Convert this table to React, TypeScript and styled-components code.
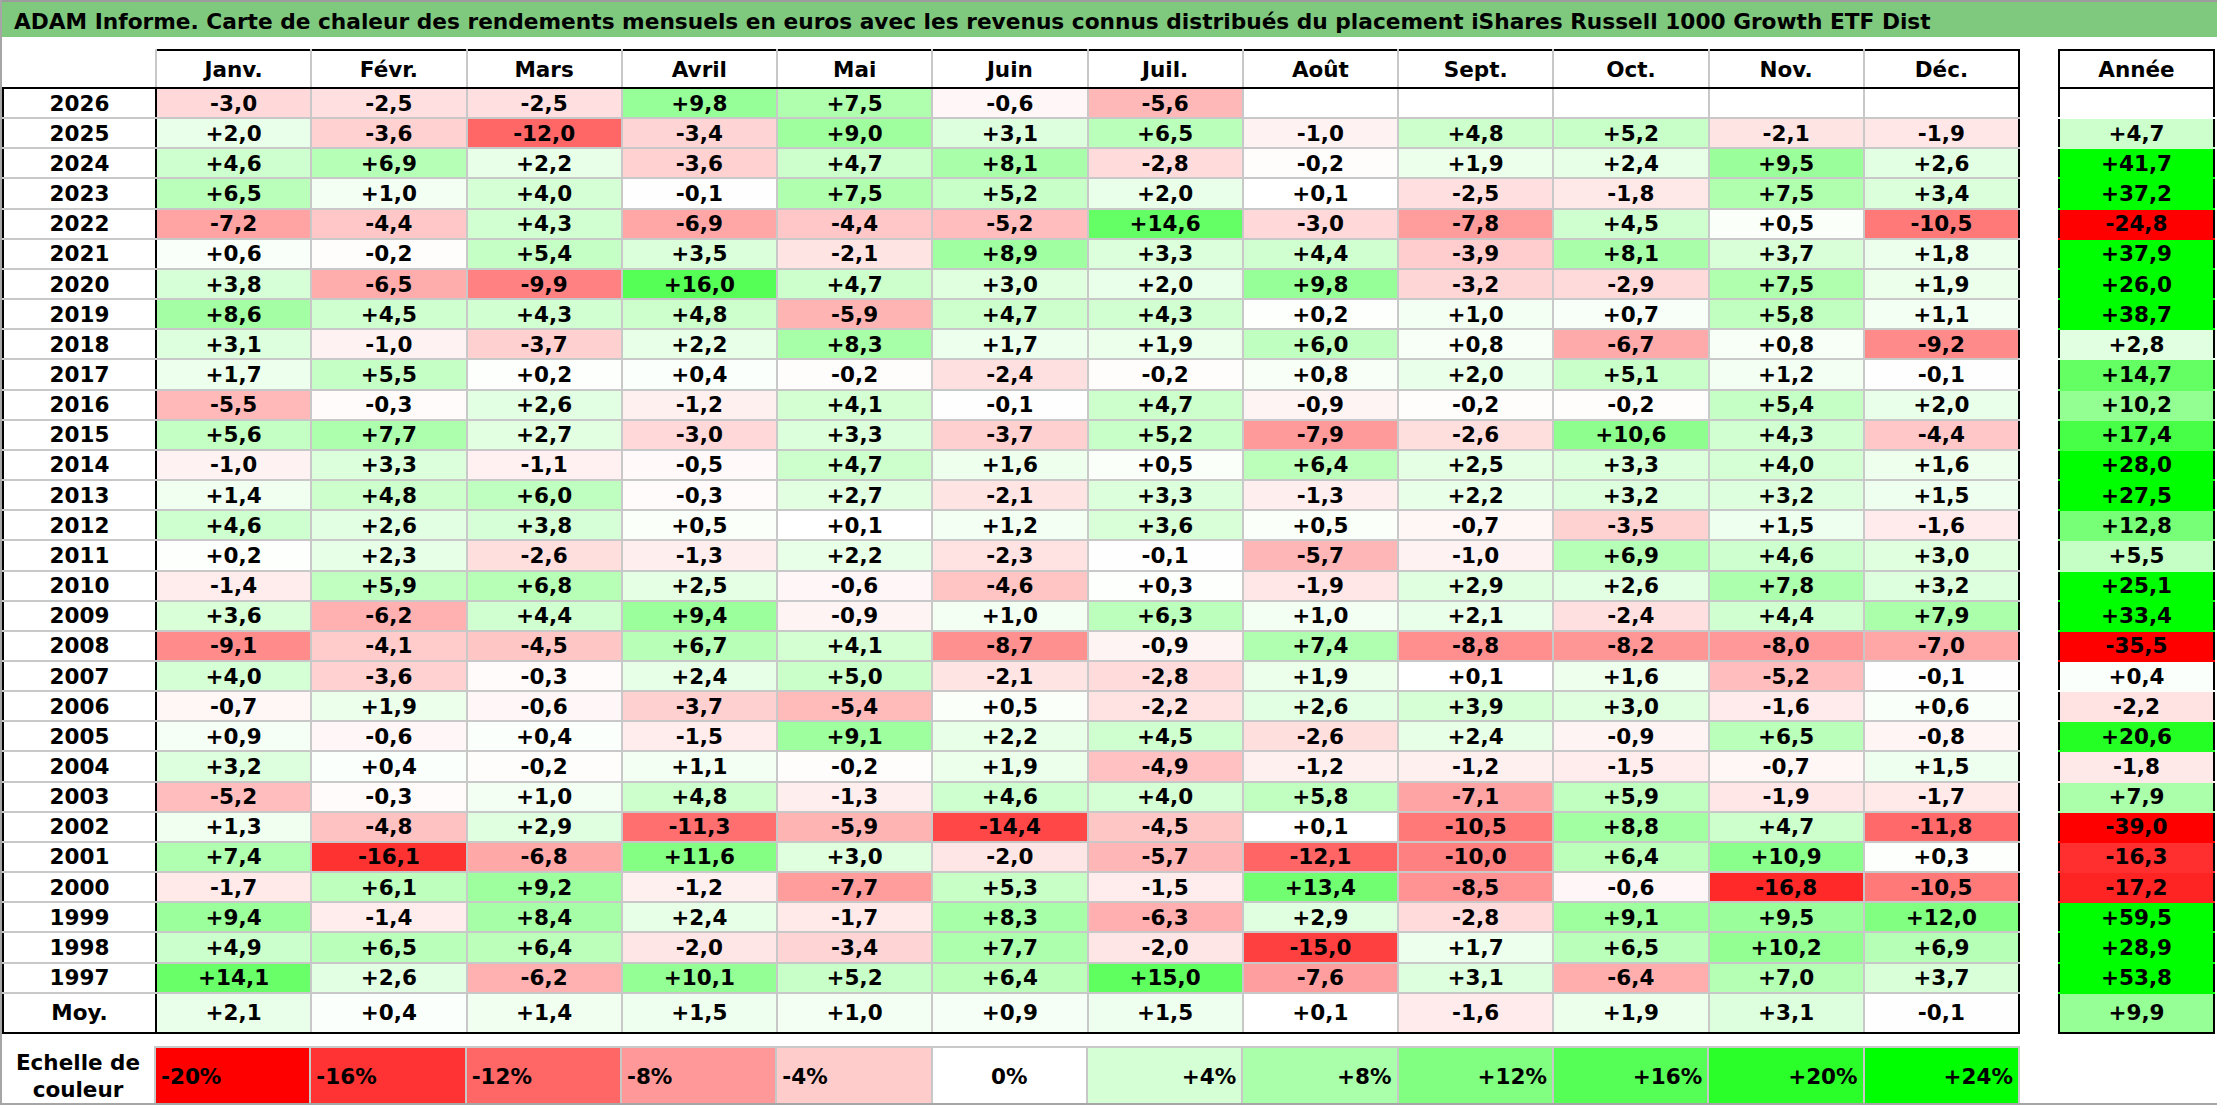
import React from 'react';
import styled, { createGlobalStyle } from 'styled-components';

const months = ['Janv.', 'Févr.', 'Mars', 'Avril', 'Mai', 'Juin', 'Juil.', 'Août', 'Sept.', 'Oct.', 'Nov.', 'Déc.'];

// year | 12 monthly values (. = pas encore connu) | year total
const rows: string[] = [
  '2026|-3,0 -2,5 -2,5 +9,8 +7,5 -0,6 -5,6 . . . . .|.',
  '2025|+2,0 -3,6 -12,0 -3,4 +9,0 +3,1 +6,5 -1,0 +4,8 +5,2 -2,1 -1,9|+4,7',
  '2024|+4,6 +6,9 +2,2 -3,6 +4,7 +8,1 -2,8 -0,2 +1,9 +2,4 +9,5 +2,6|+41,7',
  '2023|+6,5 +1,0 +4,0 -0,1 +7,5 +5,2 +2,0 +0,1 -2,5 -1,8 +7,5 +3,4|+37,2',
  '2022|-7,2 -4,4 +4,3 -6,9 -4,4 -5,2 +14,6 -3,0 -7,8 +4,5 +0,5 -10,5|-24,8',
  '2021|+0,6 -0,2 +5,4 +3,5 -2,1 +8,9 +3,3 +4,4 -3,9 +8,1 +3,7 +1,8|+37,9',
  '2020|+3,8 -6,5 -9,9 +16,0 +4,7 +3,0 +2,0 +9,8 -3,2 -2,9 +7,5 +1,9|+26,0',
  '2019|+8,6 +4,5 +4,3 +4,8 -5,9 +4,7 +4,3 +0,2 +1,0 +0,7 +5,8 +1,1|+38,7',
  '2018|+3,1 -1,0 -3,7 +2,2 +8,3 +1,7 +1,9 +6,0 +0,8 -6,7 +0,8 -9,2|+2,8',
  '2017|+1,7 +5,5 +0,2 +0,4 -0,2 -2,4 -0,2 +0,8 +2,0 +5,1 +1,2 -0,1|+14,7',
  '2016|-5,5 -0,3 +2,6 -1,2 +4,1 -0,1 +4,7 -0,9 -0,2 -0,2 +5,4 +2,0|+10,2',
  '2015|+5,6 +7,7 +2,7 -3,0 +3,3 -3,7 +5,2 -7,9 -2,6 +10,6 +4,3 -4,4|+17,4',
  '2014|-1,0 +3,3 -1,1 -0,5 +4,7 +1,6 +0,5 +6,4 +2,5 +3,3 +4,0 +1,6|+28,0',
  '2013|+1,4 +4,8 +6,0 -0,3 +2,7 -2,1 +3,3 -1,3 +2,2 +3,2 +3,2 +1,5|+27,5',
  '2012|+4,6 +2,6 +3,8 +0,5 +0,1 +1,2 +3,6 +0,5 -0,7 -3,5 +1,5 -1,6|+12,8',
  '2011|+0,2 +2,3 -2,6 -1,3 +2,2 -2,3 -0,1 -5,7 -1,0 +6,9 +4,6 +3,0|+5,5',
  '2010|-1,4 +5,9 +6,8 +2,5 -0,6 -4,6 +0,3 -1,9 +2,9 +2,6 +7,8 +3,2|+25,1',
  '2009|+3,6 -6,2 +4,4 +9,4 -0,9 +1,0 +6,3 +1,0 +2,1 -2,4 +4,4 +7,9|+33,4',
  '2008|-9,1 -4,1 -4,5 +6,7 +4,1 -8,7 -0,9 +7,4 -8,8 -8,2 -8,0 -7,0|-35,5',
  '2007|+4,0 -3,6 -0,3 +2,4 +5,0 -2,1 -2,8 +1,9 +0,1 +1,6 -5,2 -0,1|+0,4',
  '2006|-0,7 +1,9 -0,6 -3,7 -5,4 +0,5 -2,2 +2,6 +3,9 +3,0 -1,6 +0,6|-2,2',
  '2005|+0,9 -0,6 +0,4 -1,5 +9,1 +2,2 +4,5 -2,6 +2,4 -0,9 +6,5 -0,8|+20,6',
  '2004|+3,2 +0,4 -0,2 +1,1 -0,2 +1,9 -4,9 -1,2 -1,2 -1,5 -0,7 +1,5|-1,8',
  '2003|-5,2 -0,3 +1,0 +4,8 -1,3 +4,6 +4,0 +5,8 -7,1 +5,9 -1,9 -1,7|+7,9',
  '2002|+1,3 -4,8 +2,9 -11,3 -5,9 -14,4 -4,5 +0,1 -10,5 +8,8 +4,7 -11,8|-39,0',
  '2001|+7,4 -16,1 -6,8 +11,6 +3,0 -2,0 -5,7 -12,1 -10,0 +6,4 +10,9 +0,3|-16,3',
  '2000|-1,7 +6,1 +9,2 -1,2 -7,7 +5,3 -1,5 +13,4 -8,5 -0,6 -16,8 -10,5|-17,2',
  '1999|+9,4 -1,4 +8,4 +2,4 -1,7 +8,3 -6,3 +2,9 -2,8 +9,1 +9,5 +12,0|+59,5',
  '1998|+4,9 +6,5 +6,4 -2,0 -3,4 +7,7 -2,0 -15,0 +1,7 +6,5 +10,2 +6,9|+28,9',
  '1997|+14,1 +2,6 -6,2 +10,1 +5,2 +6,4 +15,0 -7,6 +3,1 -6,4 +7,0 +3,7|+53,8',
];
const average = { values: '+2,1 +0,4 +1,4 +1,5 +1,0 +0,9 +1,5 +0,1 -1,6 +1,9 +3,1 -0,1'.split(' '), total: '+9,9' };

const data = rows.map((line) => {
  const [year, vals, total] = line.split('|');
  return {
    year,
    values: vals.split(' ').map((v) => (v === '.' ? null : v)),
    total: total === '.' ? null : total,
  };
});

const legend = [-20, -16, -12, -8, -4, 0, 4, 8, 12, 16, 20, 24];

// red towards -20 %, green towards +24 %
function heat(v: string | number | null): string {
  if (v === null) return '#ffffff';
  const n = typeof v === 'number' ? v : parseFloat(v.replace(',', '.'));
  if (n < 0) {
    const c = Math.round(255 * (1 - Math.min(1, -n / 20)));
    return `rgb(255,${c},${c})`;
  }
  const c = Math.round(255 * (1 - Math.min(1, n / 24)));
  return `rgb(${c},255,${c})`;
}

const GlobalStyle = createGlobalStyle`
  html, body {
    margin: 0;
    padding: 0;
    background: #fff;
  }
  body {
    font-family: 'DejaVu Sans', 'Liberation Sans', sans-serif;
    color: #000;
  }
`;

const Page = styled.div`
  width: 2217px;
  height: 1105px;
  box-sizing: border-box;
  border-left: 2px solid #a6a6a6;
  border-bottom: 2px solid #a6a6a6;
  overflow: hidden;
`;

const TitleBar = styled.div`
  height: 37px;
  box-sizing: border-box;
  background: #7fc97f;
  border-top: 2px solid #9c9c9c;
  padding: 7px 0 0 12px;
  font-size: 21.7px;
  line-height: 25px;
  font-weight: bold;
  white-space: nowrap;
`;

const Sheet = styled.div`
  display: flex;
  align-items: flex-start;
  gap: 38px;
  margin-top: 12px;
`;

const Grid = styled.table<{ $width: number }>`
  border-collapse: collapse;
  table-layout: fixed;
  width: ${({ $width }) => $width}px;
  font-size: 21.5px;
  font-weight: bold;
  text-align: center;
`;

const HeadCell = styled.th<{ $blank?: boolean }>`
  height: 36px;
  padding: 0;
  font-weight: bold;
  border-top: 2px solid ${({ $blank }) => ($blank ? 'transparent' : '#000')};
  border-bottom: 2px solid #000;
  border-left: 2px solid ${({ $blank }) => ($blank ? 'transparent' : '#c8c8c8')};
  border-right: 2px solid #c8c8c8;
  &:nth-child(2) {
    border-left-color: #000;
  }
  &:last-child {
    border-right-color: #000;
  }
`;

const YearCell = styled.td<{ $tall?: boolean }>`
  height: ${({ $tall }) => ($tall ? 38 : 28.17)}px;
  padding: 0;
  border: 2px solid #c8c8c8;
  border-left-color: #000;
  border-right-color: #000;
`;

const ValueCell = styled.td<{ $bg: string; $tall?: boolean }>`
  height: ${({ $tall }) => ($tall ? 38 : 28.17)}px;
  padding: 0;
  background: ${({ $bg }) => $bg};
  border: 2px solid #c8c8c8;
  &:last-child {
    border-right-color: #000;
  }
`;

const AverageRow = styled.tr`
  & > td {
    border-top: 2px solid #000;
    border-bottom: 2px solid #000;
  }
`;

const TotalCell = styled.td<{ $bg: string; $tall?: boolean }>`
  height: ${({ $tall }) => ($tall ? 38 : 28.17)}px;
  padding: 0;
  background: ${({ $bg }) => $bg};
  border-left: 2px solid #000;
  border-right: 2px solid #000;
  border-top: 2px solid ${({ $tall, $bg }) => ($tall ? '#000' : $bg)};
  border-bottom: 2px solid ${({ $tall, $bg }) => ($tall ? '#000' : $bg)};
`;

const FirstTotalRow = styled.tr`
  & > td {
    border-top-color: #000;
  }
`;

const LegendTable = styled.table`
  border-collapse: collapse;
  table-layout: fixed;
  width: 2018px;
  margin-top: 12px;
  font-size: 21.5px;
  font-weight: bold;
`;

const LegendLabel = styled.td`
  height: 54px;
  padding: 0;
  text-align: center;
  line-height: 27px;
`;

const LegendStep = styled.td<{ $bg: string; $align: 'left' | 'center' | 'right' }>`
  height: 54px;
  padding: 2px 5px 0;
  background: ${({ $bg }) => $bg};
  text-align: ${({ $align }) => $align};
  border: 2px solid #c8c8c8;
  border-bottom-color: #a6a6a6;
`;

function Columns() {
  return (
    <colgroup>
      <col style={{ width: 153 }} />
      {months.map((m) => (
        <col key={m} />
      ))}
    </colgroup>
  );
}

export default function App() {
  return (
    <>
      <GlobalStyle />
      <Page>
        <TitleBar>
          ADAM Informe. Carte de chaleur des rendements mensuels en euros avec les revenus connus distribués du placement iShares Russell 1000 Growth ETF Dist
        </TitleBar>
        <Sheet>
          <div>
            <Grid $width={2018}>
              <Columns />
              <thead>
                <tr>
                  <HeadCell $blank />
                  {months.map((m) => (
                    <HeadCell key={m}>{m}</HeadCell>
                  ))}
                </tr>
              </thead>
              <tbody>
                {data.map((r) => (
                  <tr key={r.year}>
                    <YearCell>{r.year}</YearCell>
                    {r.values.map((v, i) => (
                      <ValueCell key={i} $bg={heat(v)}>
                        {v ?? ''}
                      </ValueCell>
                    ))}
                  </tr>
                ))}
                <AverageRow>
                  <YearCell $tall>Moy.</YearCell>
                  {average.values.map((v, i) => (
                    <ValueCell key={i} $tall $bg={heat(v)}>
                      {v}
                    </ValueCell>
                  ))}
                </AverageRow>
              </tbody>
            </Grid>
            <LegendTable>
              <Columns />
              <tbody>
                <tr>
                  <LegendLabel>
                    Echelle de
                    <br />
                    couleur
                  </LegendLabel>
                  {legend.map((p) => (
                    <LegendStep key={p} $bg={heat(p)} $align={p < 0 ? 'left' : p === 0 ? 'center' : 'right'}>
                      {p > 0 ? `+${p}%` : `${p}%`}
                    </LegendStep>
                  ))}
                </tr>
              </tbody>
            </LegendTable>
          </div>
          <Grid $width={157}>
            <thead>
              <tr>
                <HeadCell style={{ borderLeftColor: '#000' }}>Année</HeadCell>
              </tr>
            </thead>
            <tbody>
              {data.map((r, i) =>
                i === 0 ? (
                  <FirstTotalRow key={r.year}>
                    <TotalCell $bg={heat(r.total)}>{r.total ?? ''}</TotalCell>
                  </FirstTotalRow>
                ) : (
                  <tr key={r.year}>
                    <TotalCell $bg={heat(r.total)}>{r.total ?? ''}</TotalCell>
                  </tr>
                ),
              )}
              <tr>
                <TotalCell $tall $bg={heat(average.total)}>
                  {average.total}
                </TotalCell>
              </tr>
            </tbody>
          </Grid>
        </Sheet>
      </Page>
    </>
  );
}
